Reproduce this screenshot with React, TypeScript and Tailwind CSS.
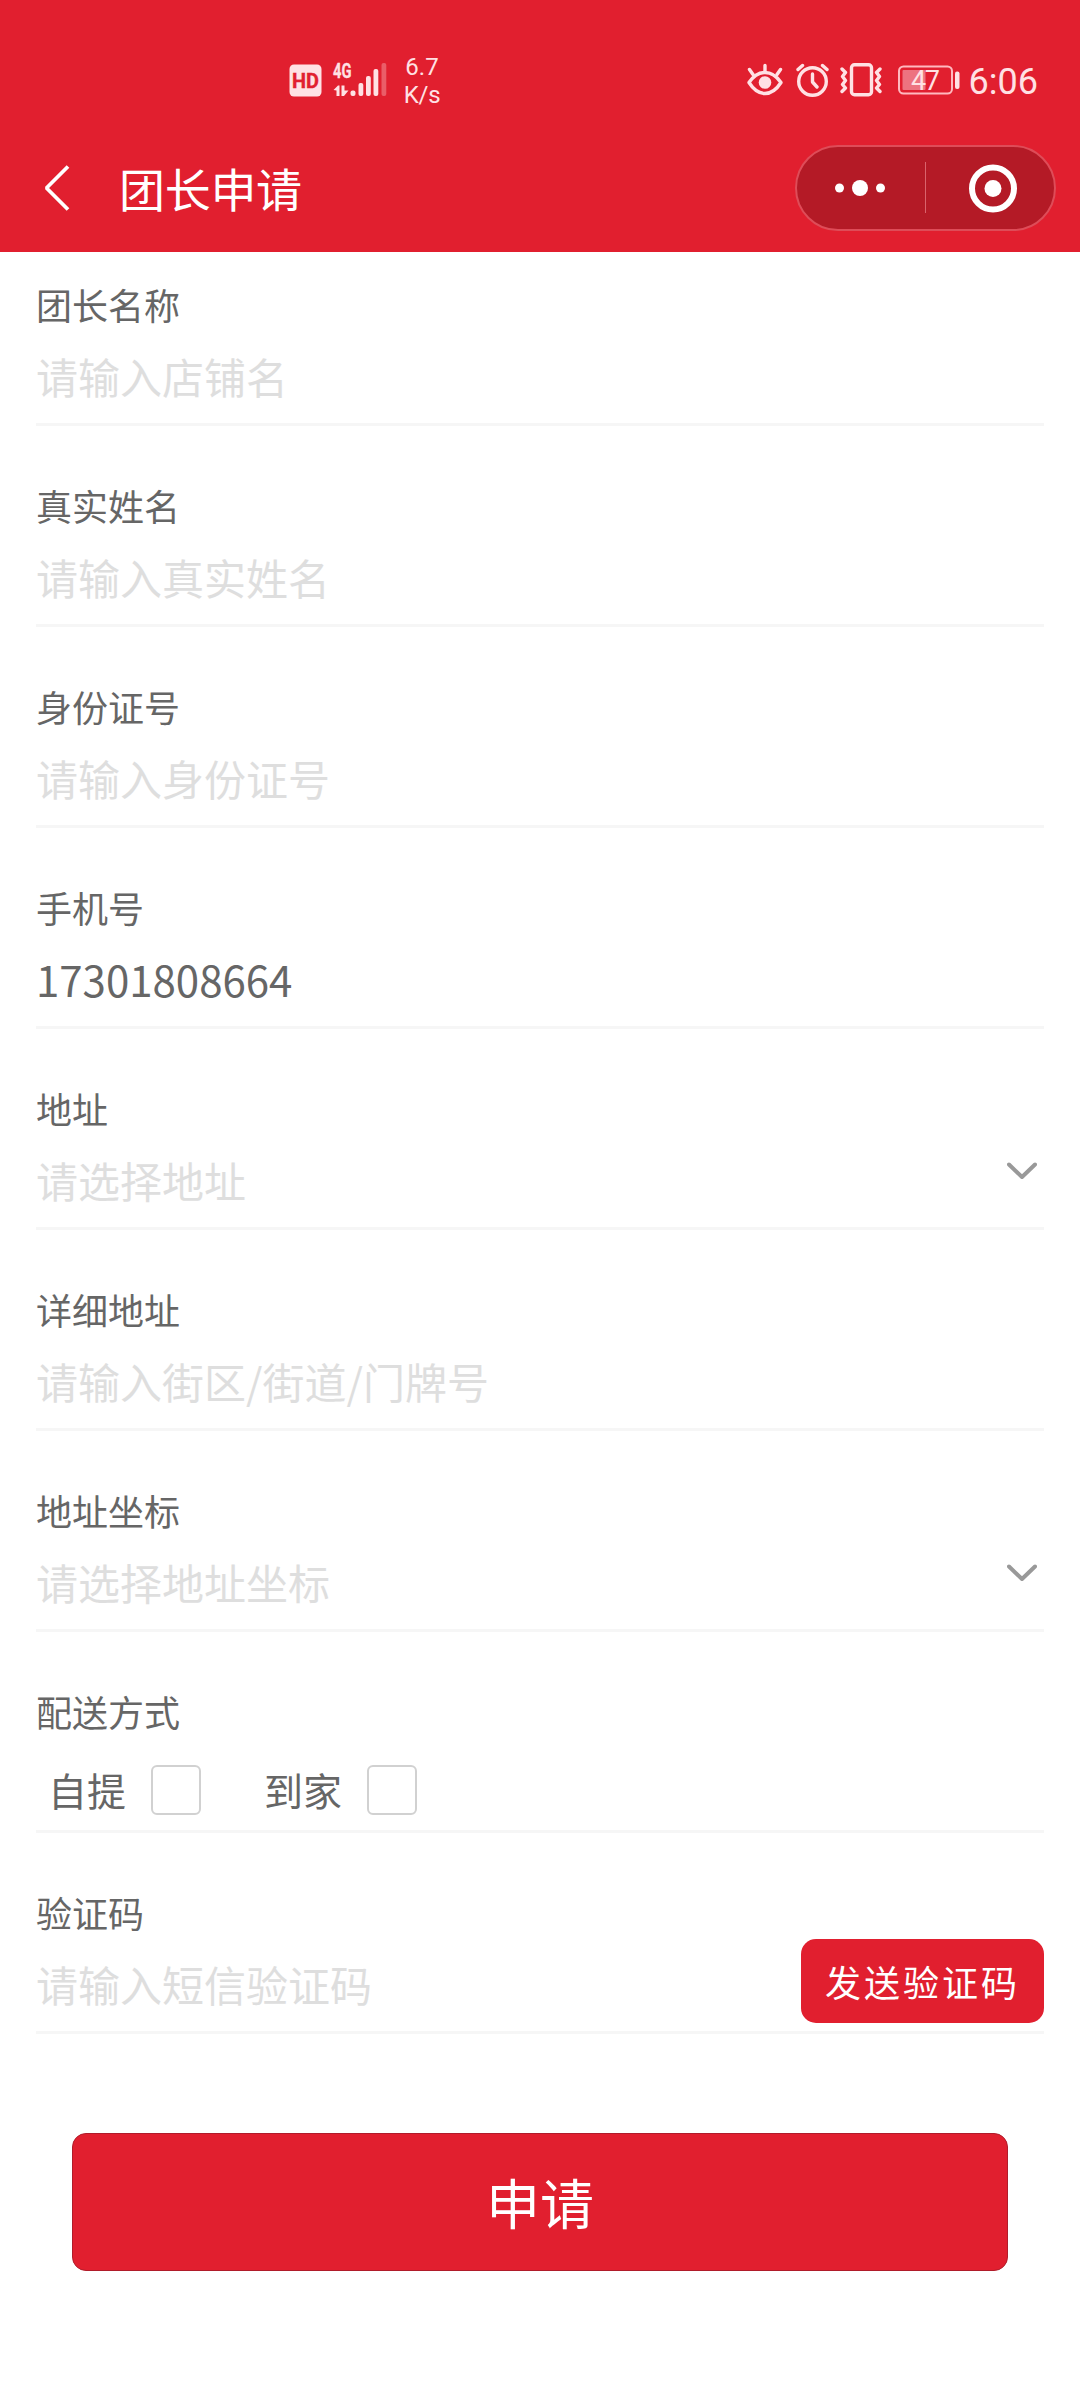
import type { ReactNode } from "react";

const StatusBar = () => (
  <div className="flex h-[126px] items-center pt-[34px] pl-[289px] pr-[42px] text-[#ffe1e4] font-['Roboto',sans-serif]">
    <svg width="33" height="33" viewBox="0 0 33 33" className="shrink-0">
      <rect x="0.5" y="0.5" width="32" height="32" rx="4.5" fill="#ffe1e4" />
      <text x="16.5" y="24" textAnchor="middle" fontSize="21" fontWeight="700" textLength="27" lengthAdjust="spacingAndGlyphs" fill="#e11f2f" stroke="#e11f2f" strokeWidth="0.4">HD</text>
    </svg>

    <svg width="56" height="48" viewBox="0 -6 56 48" className="ml-[10px] shrink-0" fill="#ffe1e4">
      <text x="1" y="16" fontSize="21" fontWeight="700" textLength="18.5" lengthAdjust="spacingAndGlyphs" stroke="#ffe1e4" strokeWidth="0.3">4G</text>
      <path d="M1.5 28 L6 23.5 H7.5 V34 H4.5 V28.5 Z" />
      <path d="M9.5 23.5 H12.5 V28.5 H16.5 L12 34 H9.5 Z" />
      <rect x="18.5" y="28.5" width="5" height="5.5" rx="2" />
      <rect x="26.5" y="21" width="4.8" height="13" rx="2" />
      <rect x="34" y="14" width="4.8" height="20" rx="2" />
      <rect x="41.5" y="7" width="4.8" height="27" rx="2" />
      <rect x="49.5" y="1" width="4.8" height="33" rx="2" opacity="0.32" />
    </svg>

    <div className="mt-px ml-[14px] w-10 text-center text-[24px] leading-7">
      <p>6.7</p>
      <p className="tracking-[-0.3px]">K/s</p>
    </div>

    <div className="ml-auto flex items-center">
      <svg width="36" height="34" viewBox="0 0 36 34" fill="none" stroke="#ffe1e4" strokeWidth="3.4" strokeLinecap="round">
        <path d="M2 19.5 Q9 9.5 18 9.5 Q27 9.5 34 19.5 Q27 30.5 18 30.5 Q9 30.5 2 19.5 Z" strokeLinejoin="round" />
        <circle cx="18" cy="19.5" r="6.3" fill="#ffe1e4" stroke="none" />
        <path d="M18 2.5 V8 M2.5 6.5 L6 11.5 M33.5 6.5 L30 11.5" />
      </svg>
      <svg width="34" height="34" viewBox="0 0 34 34" className="ml-3" fill="none" stroke="#ffe1e4" strokeWidth="3.4" strokeLinecap="round" strokeLinejoin="round">
        <circle cx="17.5" cy="18.5" r="13.8" />
        <path d="M17.5 11 V19 L22 24 M3 6.5 L7.5 2.5 M32 6.5 L27.5 2.5" />
      </svg>
      <svg width="42" height="34" viewBox="0 0 42 34" className="ml-[11px]" fill="none" stroke="#ffe1e4" strokeWidth="3.4" strokeLinecap="round" strokeLinejoin="round">
        <rect x="11.5" y="1.7" width="20" height="30" rx="3" />
        <path d="M2 6 L5.5 9.5 L2.5 13.5 L5.5 17.5 L2.5 21.5 L5.5 25 L2 28.5" />
        <path d="M40 6 L36.5 9.5 L39.5 13.5 L36.5 17.5 L39.5 21.5 L36.5 25 L40 28.5" />
      </svg>
      <svg width="63" height="42" viewBox="0 -6 63 42" className="ml-[15px] -mt-px">
        <rect x="2" y="1.5" width="53" height="27" rx="4.5" fill="none" stroke="#ffb9bf" strokeWidth="2" />
        <rect x="5.5" y="5" width="23" height="20" rx="1" fill="#ed7380" />
        <rect x="58" y="6.5" width="4.5" height="17.5" rx="2" fill="#ffe1e4" />
        <text x="28.5" y="25" textAnchor="middle" fontSize="27" textLength="29" fill="#ffe1e4">47</text>
      </svg>
      <span className="mt-[3px] ml-[9px] text-[36px] leading-9">6:06</span>
    </div>
  </div>
);

const NavBar = () => (
  <div className="flex h-[124px] items-center pl-[43px] pr-6">
    <svg width="28" height="48" viewBox="0 0 28 48" fill="none" stroke="#fff" strokeWidth="3.8">
      <path d="M25 2.5 L3.5 24 L25 45.5" strokeLinejoin="bevel" />
    </svg>
    <h1 className="-mt-[3px] ml-12 text-[46px] leading-none tracking-[-0.3px] text-white">团长申请</h1>
    <div className="ml-auto flex h-[86px] w-[261px] items-center rounded-full border-2 border-[#de4c58] bg-[#b41a26]">
      <svg width="257" height="82" viewBox="0 0 257 82" fill="#fff">
        <circle cx="42.5" cy="41" r="4.5" />
        <circle cx="63" cy="41" r="8" />
        <circle cx="83.5" cy="41" r="4.5" />
        <rect x="128" y="15" width="1" height="51" fill="#d9636c" />
        <circle cx="196" cy="41.5" r="21" fill="none" stroke="#fff" strokeWidth="6" />
        <circle cx="196" cy="41.5" r="8.5" />
      </svg>
    </div>
  </div>
);

const ChevronDown = () => (
  <svg width="30" height="18" viewBox="0 0 30 18" className="mr-[7px] -mt-[17px]" fill="none" stroke="#999" strokeWidth="4" strokeLinecap="round" strokeLinejoin="round">
    <path d="M2 2.5 L15 15 L28 2.5" />
  </svg>
);

const Field = ({ label, children }: { label: string; children: ReactNode }) => (
  <div className="h-[146px] border-b-[3px] border-[#f6f6f6]">
    <p className="h-[50px] text-4xl leading-[49px] text-[#666]">{label}</p>
    <div className="flex h-[91px] items-center justify-between text-[42px]">{children}</div>
  </div>
);

const Placeholder = ({ children }: { children: ReactNode }) => (
  <span className="text-[#dedede]">{children}</span>
);

const App = () => {
  const deliveryMethods = ["自提", "到家"];

  return (
    <div className="min-h-[2400px] w-[1080px] bg-white font-['Noto_Sans_CJK_SC',sans-serif]" lang="zh-CN">
      <header className="h-[252px] bg-[#e11f2f]">
        <StatusBar />
        <NavBar />
      </header>

      <main className="px-9 pt-7">
        <div className="flex flex-col gap-[55px]">
          <Field label="团长名称">
            <Placeholder>请输入店铺名</Placeholder>
          </Field>
          <Field label="真实姓名">
            <Placeholder>请输入真实姓名</Placeholder>
          </Field>
          <Field label="身份证号">
            <Placeholder>请输入身份证号</Placeholder>
          </Field>
          <Field label="手机号">
            <span className="text-[#666]">17301808664</span>
          </Field>
          <Field label="地址">
            <Placeholder>请选择地址</Placeholder>
            <ChevronDown />
          </Field>
          <Field label="详细地址">
            <Placeholder>请输入街区/街道/门牌号</Placeholder>
          </Field>
          <Field label="地址坐标">
            <Placeholder>请选择地址坐标</Placeholder>
            <ChevronDown />
          </Field>
          <Field label="配送方式">
            <div className="flex items-center gap-[63px] pt-[14px] pl-3">
              {deliveryMethods.map((method) => (
                <label key={method} className="flex items-center gap-[25px] text-[39px] leading-[50px] text-[#666]">
                  <span className="-mt-[2px]">{method}</span>
                  <span className="size-[50px] rounded-md border-2 border-[#d1d1d1]" />
                </label>
              ))}
            </div>
          </Field>
          <Field label="验证码">
            <Placeholder>请输入短信验证码</Placeholder>
            <button className="mt-[-5px] h-[84px] w-[243px] rounded-[15px] bg-[#e11f2f] pb-px text-4xl tracking-[3px] text-white">
              发送验证码
            </button>
          </Field>
        </div>

        <button className="mx-9 mt-[99px] block h-[138px] w-[936px] rounded-[14px] border border-[#b01c2a] bg-[#e11f2f] pb-[2px] text-[54px] text-white">
          申请
        </button>
      </main>
    </div>
  );
};

export default App;
